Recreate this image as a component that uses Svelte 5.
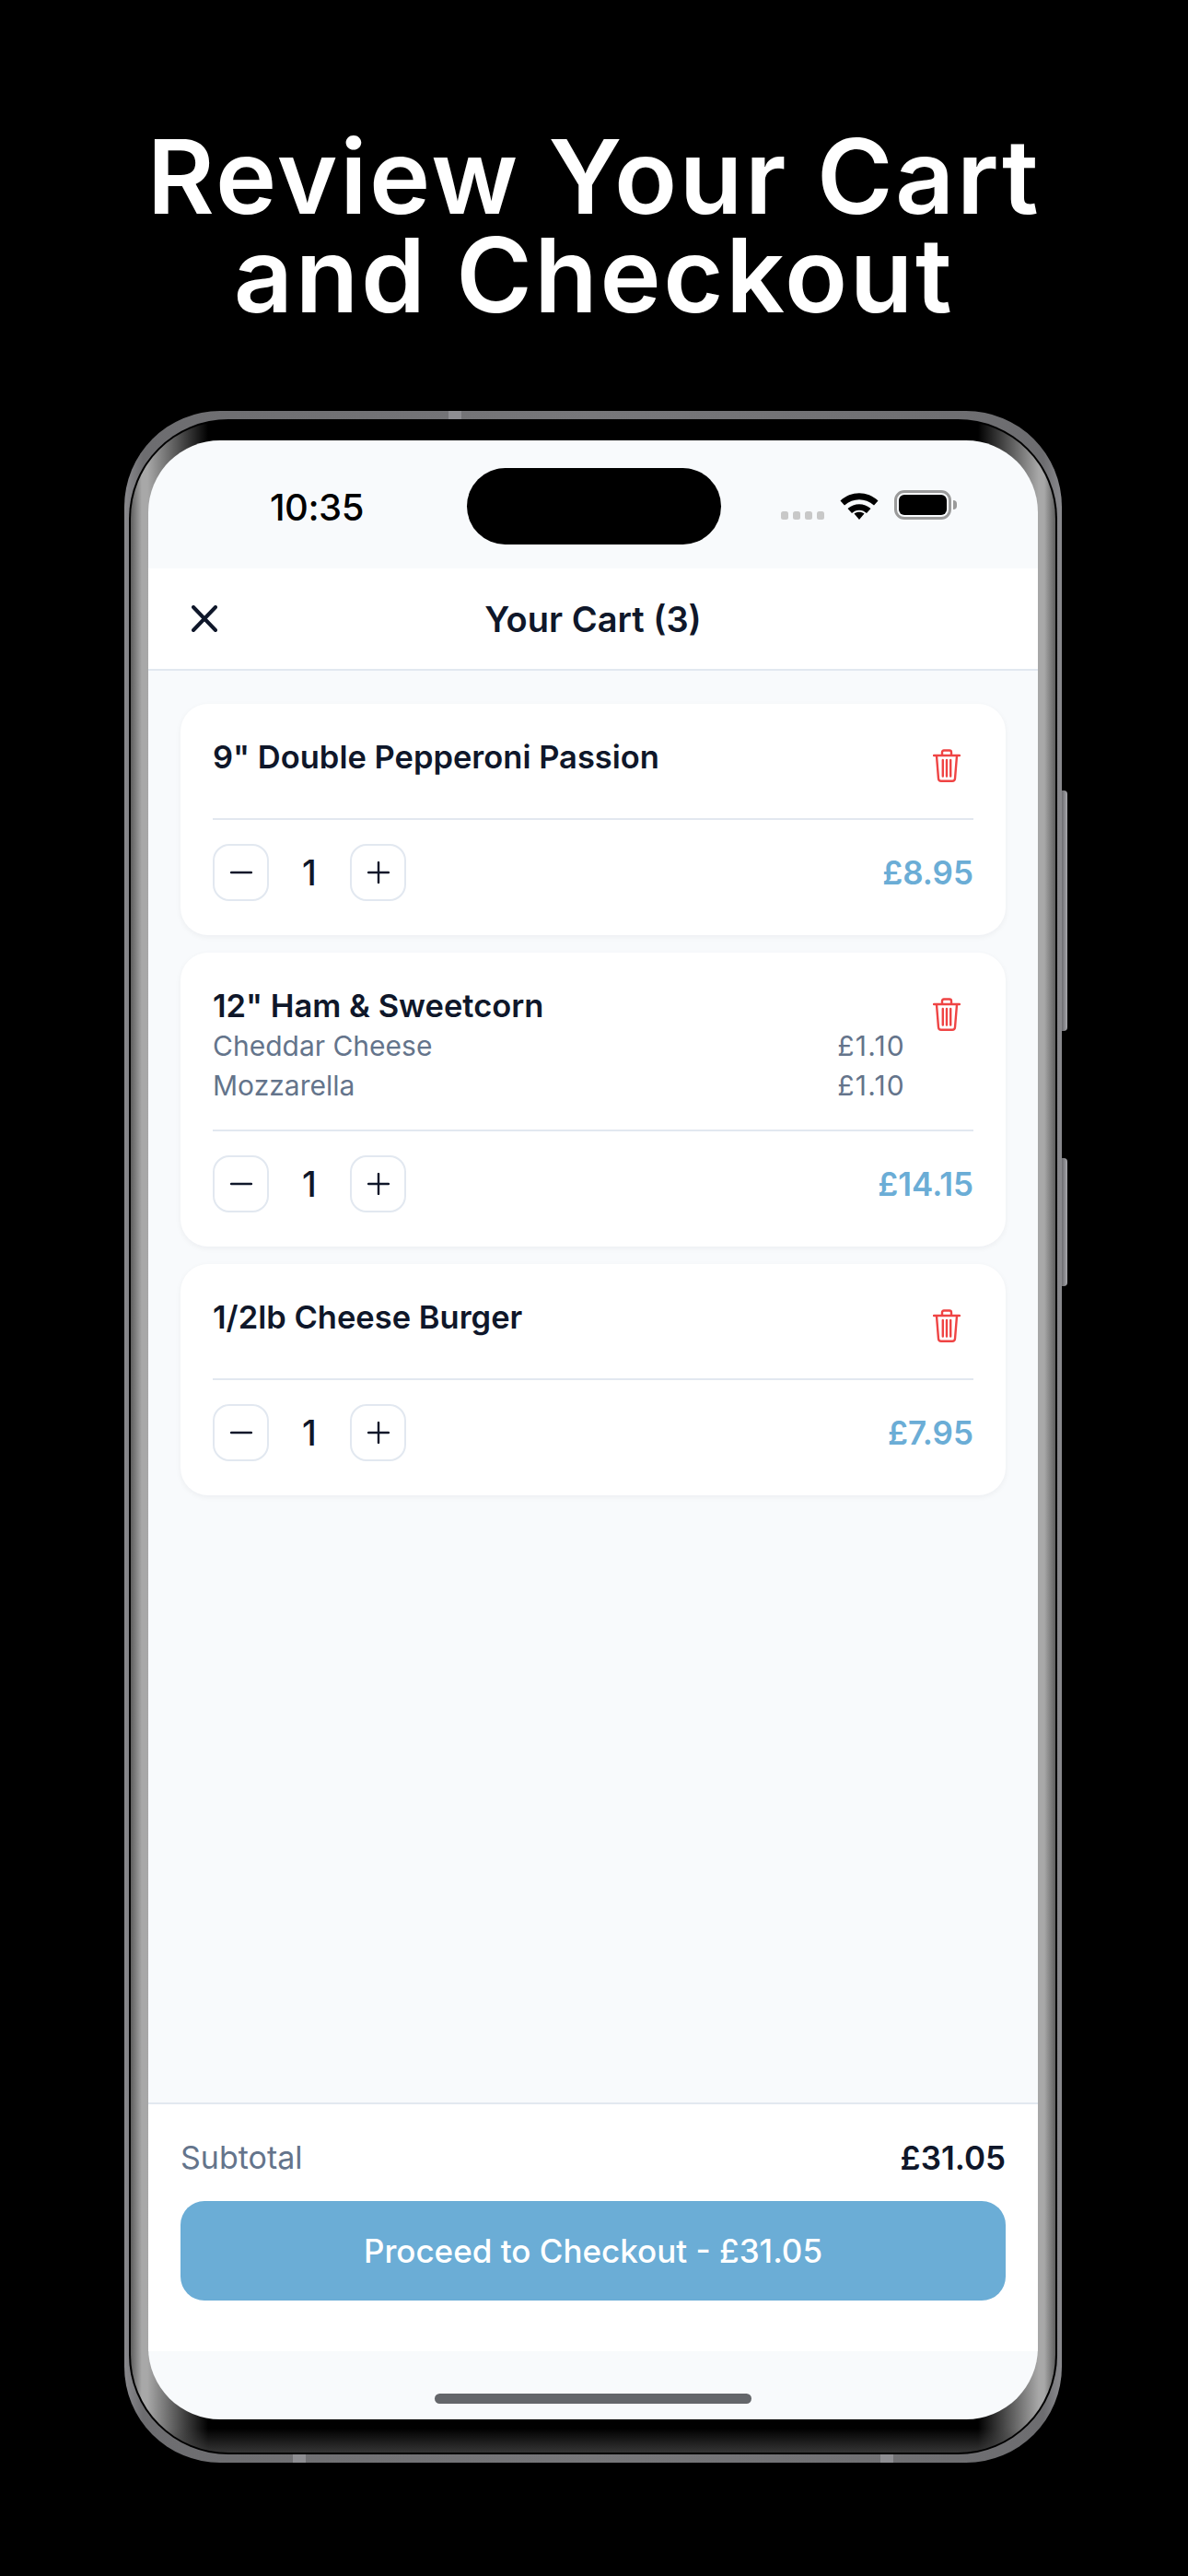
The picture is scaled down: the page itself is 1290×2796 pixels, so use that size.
<script lang="ts">
  interface Extra {
    name: string;
    price: string;
  }

  interface Item {
    name: string;
    price: string;
    qty: number;
    extras: Extra[];
  }

  const items: Item[] = [
    { name: '9" Double Pepperoni Passion', price: '£8.95', qty: 1, extras: [] },
    {
      name: '12" Ham & Sweetcorn',
      price: '£14.15',
      qty: 1,
      extras: [
        { name: 'Cheddar Cheese', price: '£1.10' },
        { name: 'Mozzarella', price: '£1.10' },
      ],
    },
    { name: '1/2lb Cheese Burger', price: '£7.95', qty: 1, extras: [] },
  ];

  const subtotal = '£31.05';
</script>

<main class="page">
  <h1 class="headline">Review Your Cart<br />and Checkout</h1>

  <div class="phone">
    <span class="side-btn side-top"></span>
    <span class="side-btn side-bottom"></span>
    <span class="seam seam-top"></span>
    <span class="seam seam-bl"></span>
    <span class="seam seam-br"></span>

    <div class="groove">
      <div class="bezel">
        <div class="screen">
          <div class="status">
            <span class="time">10:35</span>
            <span class="island"></span>
            <div class="status-icons">
              <span class="dots"><i></i><i></i><i></i><i></i></span>
              <svg class="wifi" viewBox="0 0 42 32" width="42" height="32">
                <path d="M0.5 11.5 C 12 0.5, 30 0.5, 41.5 11.5 L 37 16.5 C 27.5 8, 14.5 8, 5 16.5 Z" fill="#000" />
                <path d="M8.5 20 C 15.5 13.5, 26.5 13.5, 33.5 20 L 29 25 C 24.5 20.5, 17.5 20.5, 13 25 Z" fill="#000" />
                <path d="M15.5 25.5 C 18.5 23, 23.5 23, 26.5 25.5 L 21 32 Z" fill="#000" />
              </svg>
              <span class="battery"><span class="battery-fill"></span></span>
              <span class="battery-tip"></span>
            </div>
          </div>

          <header class="topbar">
            <svg class="close" viewBox="0 0 28 29" width="28" height="29">
              <path d="M2 2 L26 27 M26 2 L2 27" stroke="#0f172a" stroke-width="4" stroke-linecap="round" fill="none" />
            </svg>
            <span class="title">Your Cart (3)</span>
          </header>

          <section class="list">
            {#each items as item}
              <article class="card">
                <div class="card-top">
                  <div class="card-info">
                    <div class="item-name">{item.name}</div>
                    {#each item.extras as extra}
                      <div class="extra">
                        <span>{extra.name}</span>
                        <span class="extra-price">{extra.price}</span>
                      </div>
                    {/each}
                  </div>
                  <div class="trash">
                    <svg viewBox="0 0 30 36" width="30" height="36" fill="none" stroke="#ef4444" stroke-width="2.4" stroke-linejoin="round" stroke-linecap="round">
                      <path d="M1 7 H29" />
                      <path d="M10 6.5 V3.5 Q10 1.5 12 1.5 H18 Q20 1.5 20 3.5 V6.5" />
                      <path d="M4 7.5 L6 32 Q6.2 34.8 9 34.8 H21 Q23.8 34.8 24 32 L26 7.5" />
                      <path d="M10.8 12 V29.5 M15 12 V29.5 M19.2 12 V29.5" />
                    </svg>
                  </div>
                </div>
                <div class="card-bottom">
                  <div class="qty">
                    <span class="qty-btn">
                      <svg viewBox="0 0 24 24" width="24" height="24"><path d="M1 12 H23" stroke="#0f172a" stroke-width="2.4" stroke-linecap="round" /></svg>
                    </span>
                    <span class="qty-num">{item.qty}</span>
                    <span class="qty-btn">
                      <svg viewBox="0 0 24 24" width="24" height="24"><path d="M1 12 H23 M12 1 V23" stroke="#0f172a" stroke-width="2.4" stroke-linecap="round" /></svg>
                    </span>
                  </div>
                  <span class="price">{item.price}</span>
                </div>
              </article>
            {/each}
          </section>

          <footer class="footer">
            <div class="subtotal">
              <span class="subtotal-label">Subtotal</span>
              <span class="subtotal-value">{subtotal}</span>
            </div>
            <div class="checkout">Proceed to Checkout - {subtotal}</div>
          </footer>

          <div class="home"><span class="home-bar"></span></div>
        </div>
      </div>
    </div>
  </div>
</main>

<style>
  :global(body) {
    margin: 0;
    background: #000;
  }

  .page {
    width: 1290px;
    height: 2796px;
    overflow: hidden;
    background: #000;
    font-family: Inter, 'Liberation Sans', sans-serif;
    color: #0f172a;
  }

  .headline {
    margin: 0;
    padding-top: 138px;
    height: 446px;
    box-sizing: border-box;
    text-align: center;
    color: #fff;
    font-size: 112px;
    line-height: 107px;
    font-weight: 600;
    letter-spacing: 2.6px;
  }

  .phone {
    position: relative;
    margin-left: 135px;
    width: 1018px;
    height: 2227px;
    box-sizing: border-box;
    padding: 9px 5px;
    border-radius: 104px;
    background: linear-gradient(to right, #8a8a8e, #6d6d70 2%, #77777a 50%, #6d6d70 98%, #8a8a8e);
  }

  .seam {
    position: absolute;
    width: 14px;
    height: 9px;
    background: #8e8e92;
  }

  .seam-top {
    top: 0;
    left: 352px;
  }

  .seam-bl {
    bottom: 0;
    left: 183px;
  }

  .seam-br {
    bottom: 0;
    right: 183px;
  }

  .side-btn {
    position: absolute;
    right: -6px;
    width: 6px;
    border-radius: 0 4px 4px 0;
    background: linear-gradient(to right, #6b6b6f, #a9a9ae);
  }

  .side-top {
    top: 412px;
    height: 261px;
  }

  .side-bottom {
    top: 811px;
    height: 139px;
  }

  .groove {
    height: 100%;
    box-sizing: border-box;
    padding: 2px;
    border-radius: 108px;
    background: #000;
  }

  .bezel {
    height: 100%;
    box-sizing: border-box;
    padding: 21px 19px 36px;
    border-radius: 106px;
    background:
      linear-gradient(to top, rgba(66, 66, 66, 0.8) 0, rgba(0, 0, 0, 0) 26px),
      linear-gradient(
        to right,
        #5f5f5f 0,
        #a8a8a8 12px,
        #a8a8a8 18px,
        #000 84px,
        #000 calc(100% - 84px),
        #a8a8a8 calc(100% - 18px),
        #a8a8a8 calc(100% - 12px),
        #5f5f5f 100%
      );
  }

  .screen {
    display: flex;
    flex-direction: column;
    height: 100%;
    overflow: hidden;
    border-radius: 78px;
    background: #f8fafc;
  }

  .status {
    position: relative;
    flex: none;
    height: 139px;
    display: flex;
    align-items: center;
    justify-content: space-between;
    padding: 0 88px 0 132px;
    box-sizing: border-box;
  }

  .time {
    font-size: 40px;
    font-weight: 500;
    color: #000;
    margin-top: 6px;
    letter-spacing: -0.5px;
  }

  .island {
    position: absolute;
    left: 346px;
    top: 30px;
    width: 276px;
    height: 83px;
    border-radius: 42px;
    background: #000;
  }

  .status-icons {
    display: flex;
    align-items: flex-end;
    margin-top: 0;
  }

  .dots {
    display: flex;
    gap: 5px;
    margin-right: 17px;
  }

  .dots i {
    width: 8px;
    height: 9px;
    border-radius: 2.5px;
    background: #c8c8c8;
  }

  .battery {
    display: block;
    width: 62px;
    height: 32px;
    margin-left: 17px;
    padding: 2px;
    box-sizing: border-box;
    border: 3px solid #9a9a9a;
    border-radius: 11px;
  }

  .battery-fill {
    display: block;
    height: 100%;
    border-radius: 6px;
    background: #000;
  }

  .battery-tip {
    width: 4px;
    height: 10px;
    margin: 0 0 11px 2px;
    border-radius: 0 4px 4px 0;
    background: #9a9a9a;
  }

  .topbar {
    position: relative;
    flex: none;
    height: 111px;
    display: flex;
    align-items: center;
    justify-content: center;
    box-sizing: border-box;
    background: #fff;
    border-bottom: 2px solid #e2e8f0;
  }

  .close {
    position: absolute;
    left: 47px;
    top: 40px;
  }

  .title {
    font-size: 38px;
    font-weight: 600;
    color: #0f172a;
  }

  .list {
    flex: 1;
    display: flex;
    flex-direction: column;
    gap: 19px;
    padding: 36px 35px 0;
  }

  .card {
    padding: 36px 35px 37px;
    border-radius: 30px;
    background: #fff;
    box-shadow: 0 2px 6px rgba(15, 23, 42, 0.05);
  }

  .card-top {
    display: flex;
    padding-bottom: 26px;
    border-bottom: 2px solid #e2e8f0;
  }

  .card-info {
    flex: 1;
    padding-right: 16px;
  }

  .item-name {
    font-size: 34.5px;
    line-height: 44px;
    font-weight: 600;
    color: #0f172a;
  }

  .extra {
    display: flex;
    justify-content: space-between;
    font-size: 30px;
    line-height: 43px;
    color: #64748b;
  }

  .extra-price {
    letter-spacing: 1.2px;
  }

  .trash {
    flex: none;
    width: 58px;
    height: 62px;
    display: flex;
    align-items: center;
    justify-content: center;
  }

  .card-bottom {
    display: flex;
    align-items: center;
    justify-content: space-between;
    padding-top: 26px;
  }

  .qty {
    display: flex;
    align-items: center;
  }

  .qty-btn {
    width: 61px;
    height: 62px;
    box-sizing: border-box;
    display: flex;
    align-items: center;
    justify-content: center;
    border: 2px solid #e2e8f0;
    border-radius: 18px;
  }

  .qty-num {
    width: 88px;
    text-align: center;
    font-size: 38px;
    font-weight: 500;
  }

  .price {
    font-size: 35px;
    font-weight: 600;
    color: #6badd6;
  }

  .footer {
    flex: none;
    height: 270px;
    box-sizing: border-box;
    padding: 0 35px;
    background: #fff;
    border-top: 2px solid #e2e8f0;
  }

  .subtotal {
    display: flex;
    align-items: center;
    justify-content: space-between;
    height: 105px;
    padding-top: 10px;
    box-sizing: border-box;
  }

  .subtotal-label {
    font-size: 34px;
    color: #64748b;
  }

  .subtotal-value {
    font-size: 35px;
    font-weight: 600;
    color: #0f172a;
  }

  .checkout {
    height: 108px;
    display: flex;
    align-items: center;
    justify-content: center;
    border-radius: 26px;
    background: #6badd6;
    color: #fff;
    font-size: 35px;
    font-weight: 500;
  }

  .home {
    flex: none;
    height: 74px;
    box-sizing: border-box;
    display: flex;
    justify-content: center;
    padding-top: 46px;
  }

  .home-bar {
    width: 344px;
    height: 11px;
    border-radius: 6px;
    background: #64666a;
  }
</style>
